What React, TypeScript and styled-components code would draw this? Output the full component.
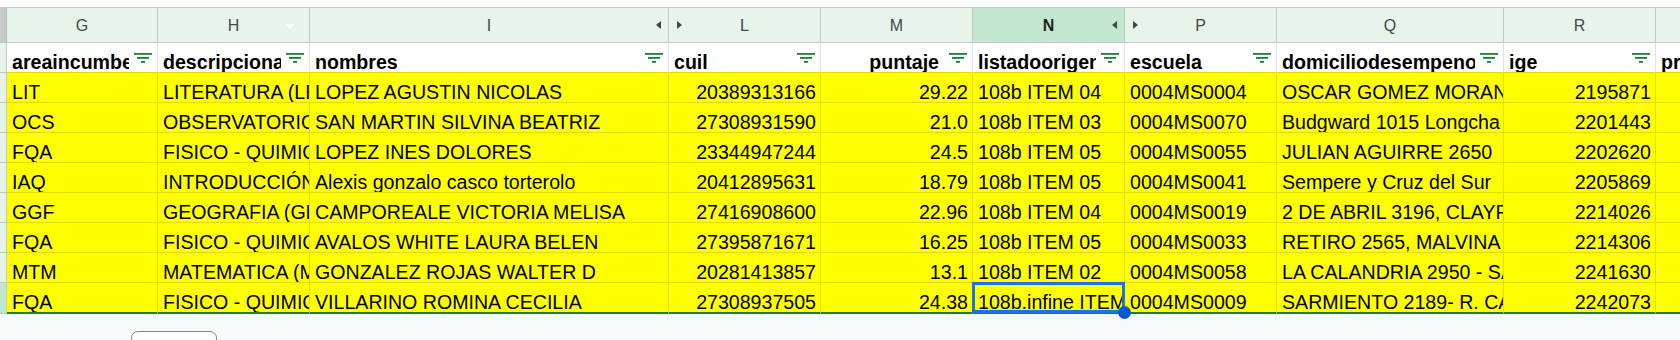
import React from "react";
import styled, { createGlobalStyle, css } from "styled-components";

const COLS = "7px 151px 152px 359px 152px 152px 152px 152px 227px 152px 152px";

const GlobalStyle = createGlobalStyle`
  html, body { margin: 0; padding: 0; }
  body {
    background: #f8f9fa;
    width: 1680px;
    height: 340px;
    overflow: hidden;
    font-family: "Liberation Sans", Arial, sans-serif;
  }
`;

const Page = styled.div`
  display: flex;
  flex-direction: column;
  width: 1680px;
  height: 340px;
  overflow: hidden;
`;

const TopStrip = styled.div`
  flex: none;
  height: 7px;
  background: #ffffff;
  border-bottom: 1px solid #c4c7c5;
`;

const Sheet = styled.div`
  display: flex;
  flex-direction: column;
  width: 1808px;
  flex: none;
`;

const Row = styled.div<{ $h: number }>`
  display: grid;
  grid-template-columns: ${COLS};
  height: ${(p) => p.$h}px;
`;

const Corner = styled.div`
  box-sizing: border-box;
  background: #c8c8c8;
  border-right: 1px solid #b4b4b4;
  border-bottom: 1px solid #c4c7c5;
`;

const Gutter = styled.div<{ $active?: boolean }>`
  box-sizing: border-box;
  background: ${(p) => (p.$active ? "#c4e7cf" : "#e6f4ea")};
  border-right: 1px solid #c4c7c5;
  border-bottom: 1px solid #c4c7c5;
`;

const Letter = styled.div<{ $active?: boolean }>`
  position: relative;
  box-sizing: border-box;
  display: flex;
  align-items: center;
  justify-content: center;
  padding-top: 2px;
  background: ${(p) => (p.$active ? "#c4e7cf" : "#e6f4ea")};
  border-right: 1px solid #c4c7c5;
  border-bottom: 1px solid #c4c7c5;
  color: ${(p) => (p.$active ? "#1f1f1f" : "#444746")};
  font-size: 16px;
  font-weight: ${(p) => (p.$active ? 700 : 400)};
`;

const Arrow = styled.span<{ $side: "left" | "right" }>`
  position: absolute;
  top: 50%;
  margin-top: -4px;
  width: 0;
  height: 0;
  border-top: 4.5px solid transparent;
  border-bottom: 4.5px solid transparent;
  ${(p) =>
    p.$side === "right"
      ? css`
          right: 7px;
          border-right: 5px solid #444746;
        `
      : css`
          left: 8px;
          border-left: 5px solid #444746;
        `}
`;

const DropCaret = styled.span`
  position: absolute;
  top: 16px;
  right: 14px;
  width: 0;
  height: 0;
  border-left: 5px solid transparent;
  border-right: 5px solid transparent;
  border-top: 5px solid #ffffff;
`;

const HeadCell = styled.div`
  box-sizing: border-box;
  display: flex;
  align-items: stretch;
  min-width: 0;
  background: #ffffff;
  border-right: 1px solid #e1e3e1;
  border-bottom: 1px solid #dede00;
`;

const HeadLabel = styled.div<{ $align: "left" | "right" }>`
  flex: 1;
  min-width: 0;
  overflow: hidden;
  white-space: nowrap;
  box-sizing: border-box;
  padding: 9px 5px 0 5px;
  line-height: 20px;
  font-size: 19.6px;
  font-weight: 700;
  color: #000;
  text-align: ${(p) => p.$align};
`;

const FilterBtn = styled.div`
  flex: none;
  display: flex;
  align-items: center;
  padding: 0 5px 0 5px;
  background: #ffffff;
`;

const Cell = styled.div<{ $align: "left" | "right"; $last?: boolean; $sel?: boolean }>`
  position: relative;
  z-index: ${(p) => (p.$sel ? 2 : "auto")};
  box-sizing: border-box;
  min-width: 0;
  overflow: ${(p) => (p.$sel ? "visible" : "hidden")};
  white-space: nowrap;
  padding: 9px 4px 0 5px;
  line-height: 20px;
  font-size: 19.6px;
  color: #000;
  background: #ffff00;
  text-align: ${(p) => p.$align};
  border-right: 1px solid #e0e000;
  border-bottom: ${(p) => (p.$last ? "2px solid #188038" : "1px solid #e0e000")};
`;

const Clip = styled.span`
  display: block;
  overflow: hidden;
  margin-right: -4px;
`;

const Selection = styled.div`
  position: absolute;
  left: -1px;
  top: -1px;
  right: -1px;
  bottom: -1px;
  border: 3px solid #1a73e8;
  pointer-events: none;
`;

const Handle = styled.div`
  position: absolute;
  right: -7px;
  bottom: -7px;
  width: 13px;
  height: 13px;
  border-radius: 50%;
  background: #0b57d0;
`;

const Footer = styled.div`
  flex: none;
  padding: 17px 0 0 131px;
`;

const AddButton = styled.div`
  box-sizing: border-box;
  width: 86px;
  height: 32px;
  border: 1px solid #80868b;
  border-radius: 7px;
  background: #ffffff;
`;

const FilterIcon = () => (
  <svg width="18" height="10" viewBox="0 0 18 10" aria-hidden="true">
    <rect x="0" y="0" width="18" height="1.8" fill="#188038" />
    <rect x="3" y="4" width="12" height="1.8" fill="#188038" />
    <rect x="7" y="8" width="4" height="1.8" fill="#188038" />
  </svg>
);

type Align = "left" | "right";

const letters: { l: string; active?: boolean; left?: boolean; right?: boolean; caret?: boolean }[] = [
  { l: "G" },
  { l: "H", caret: true },
  { l: "I", right: true },
  { l: "L", left: true },
  { l: "M" },
  { l: "N", active: true, right: true },
  { l: "P", left: true },
  { l: "Q" },
  { l: "R" },
  { l: "S" },
];

const headers: { label: string; align: Align; filter: boolean }[] = [
  { label: "areaincumbencia", align: "left", filter: true },
  { label: "descripcionarea", align: "left", filter: true },
  { label: "nombres", align: "left", filter: true },
  { label: "cuil", align: "left", filter: true },
  { label: "puntaje", align: "right", filter: true },
  { label: "listadoorigen", align: "left", filter: true },
  { label: "escuela", align: "left", filter: true },
  { label: "domiciliodesempeno", align: "left", filter: true },
  { label: "ige", align: "left", filter: true },
  { label: "prioridad", align: "left", filter: false },
];

const aligns: Align[] = ["left", "left", "left", "right", "right", "left", "left", "left", "right", "left"];

const rows: string[][] = [
  ["LIT", "LITERATURA (LENGUA Y LITERATURA)", "LOPEZ AGUSTIN NICOLAS", "20389313166", "29.22", "108b ITEM 04", "0004MS0004", "OSCAR GOMEZ MORAN 1455", "2195871", ""],
  ["OCS", "OBSERVATORIO DE CIENCIAS SOCIALES", "SAN MARTIN SILVINA BEATRIZ", "27308931590", "21.0", "108b ITEM 03", "0004MS0070", "Budgward 1015 Longcha", "2201443", ""],
  ["FQA", "FISICO - QUIMICA", "LOPEZ INES DOLORES", "23344947244", "24.5", "108b ITEM 05", "0004MS0055", "JULIAN AGUIRRE 2650", "2202620", ""],
  ["IAQ", "INTRODUCCIÓN A LA QUIMICA", "Alexis gonzalo casco torterolo", "20412895631", "18.79", "108b ITEM 05", "0004MS0041", "Sempere y Cruz del Sur", "2205869", ""],
  ["GGF", "GEOGRAFIA (GEOGRAFIA)", "CAMPOREALE VICTORIA MELISA", "27416908600", "22.96", "108b ITEM 04", "0004MS0019", "2 DE ABRIL 3196, CLAYPOLE", "2214026", ""],
  ["FQA", "FISICO - QUIMICA", "AVALOS WHITE LAURA BELEN", "27395871671", "16.25", "108b ITEM 05", "0004MS0033", "RETIRO 2565, MALVINA", "2214306", ""],
  ["MTM", "MATEMATICA (MATEMATICA)", "GONZALEZ ROJAS WALTER D", "20281413857", "13.1", "108b ITEM 02", "0004MS0058", "LA CALANDRIA 2950 - SAN FRANCISCO", "2241630", ""],
  ["FQA", "FISICO - QUIMICA", "VILLARINO ROMINA CECILIA", "27308937505", "24.38", "108b.infine ITEM 05", "0004MS0009", "SARMIENTO 2189- R. CALZADA", "2242073", ""],
];

export default function App() {
  return (
    <>
      <GlobalStyle />
      <Page>
        <TopStrip />
        <Sheet>
          <Row $h={35}>
            <Corner />
            {letters.map((c) => (
              <Letter key={c.l} $active={c.active}>
                {c.l}
                {c.caret && <DropCaret />}
                {c.left && <Arrow $side="left" />}
                {c.right && <Arrow $side="right" />}
              </Letter>
            ))}
          </Row>
          <Row $h={30}>
            <Gutter />
            {headers.map((h) => (
              <HeadCell key={h.label}>
                <HeadLabel $align={h.align}>{h.label}</HeadLabel>
                {h.filter && (
                  <FilterBtn>
                    <FilterIcon />
                  </FilterBtn>
                )}
              </HeadCell>
            ))}
          </Row>
          {rows.map((r, i) => {
            const last = i === rows.length - 1;
            return (
              <Row key={i} $h={last ? 31 : 30}>
                <Gutter $active={last} />
                {r.map((v, j) => {
                  const sel = last && j === 5;
                  return (
                    <Cell key={j} $align={aligns[j]} $last={last} $sel={sel}>
                      {sel ? (
                        <>
                          <Clip>{v}</Clip>
                          <Selection />
                          <Handle />
                        </>
                      ) : (
                        v
                      )}
                    </Cell>
                  );
                })}
              </Row>
            );
          })}
        </Sheet>
        <Footer>
          <AddButton />
        </Footer>
      </Page>
    </>
  );
}
